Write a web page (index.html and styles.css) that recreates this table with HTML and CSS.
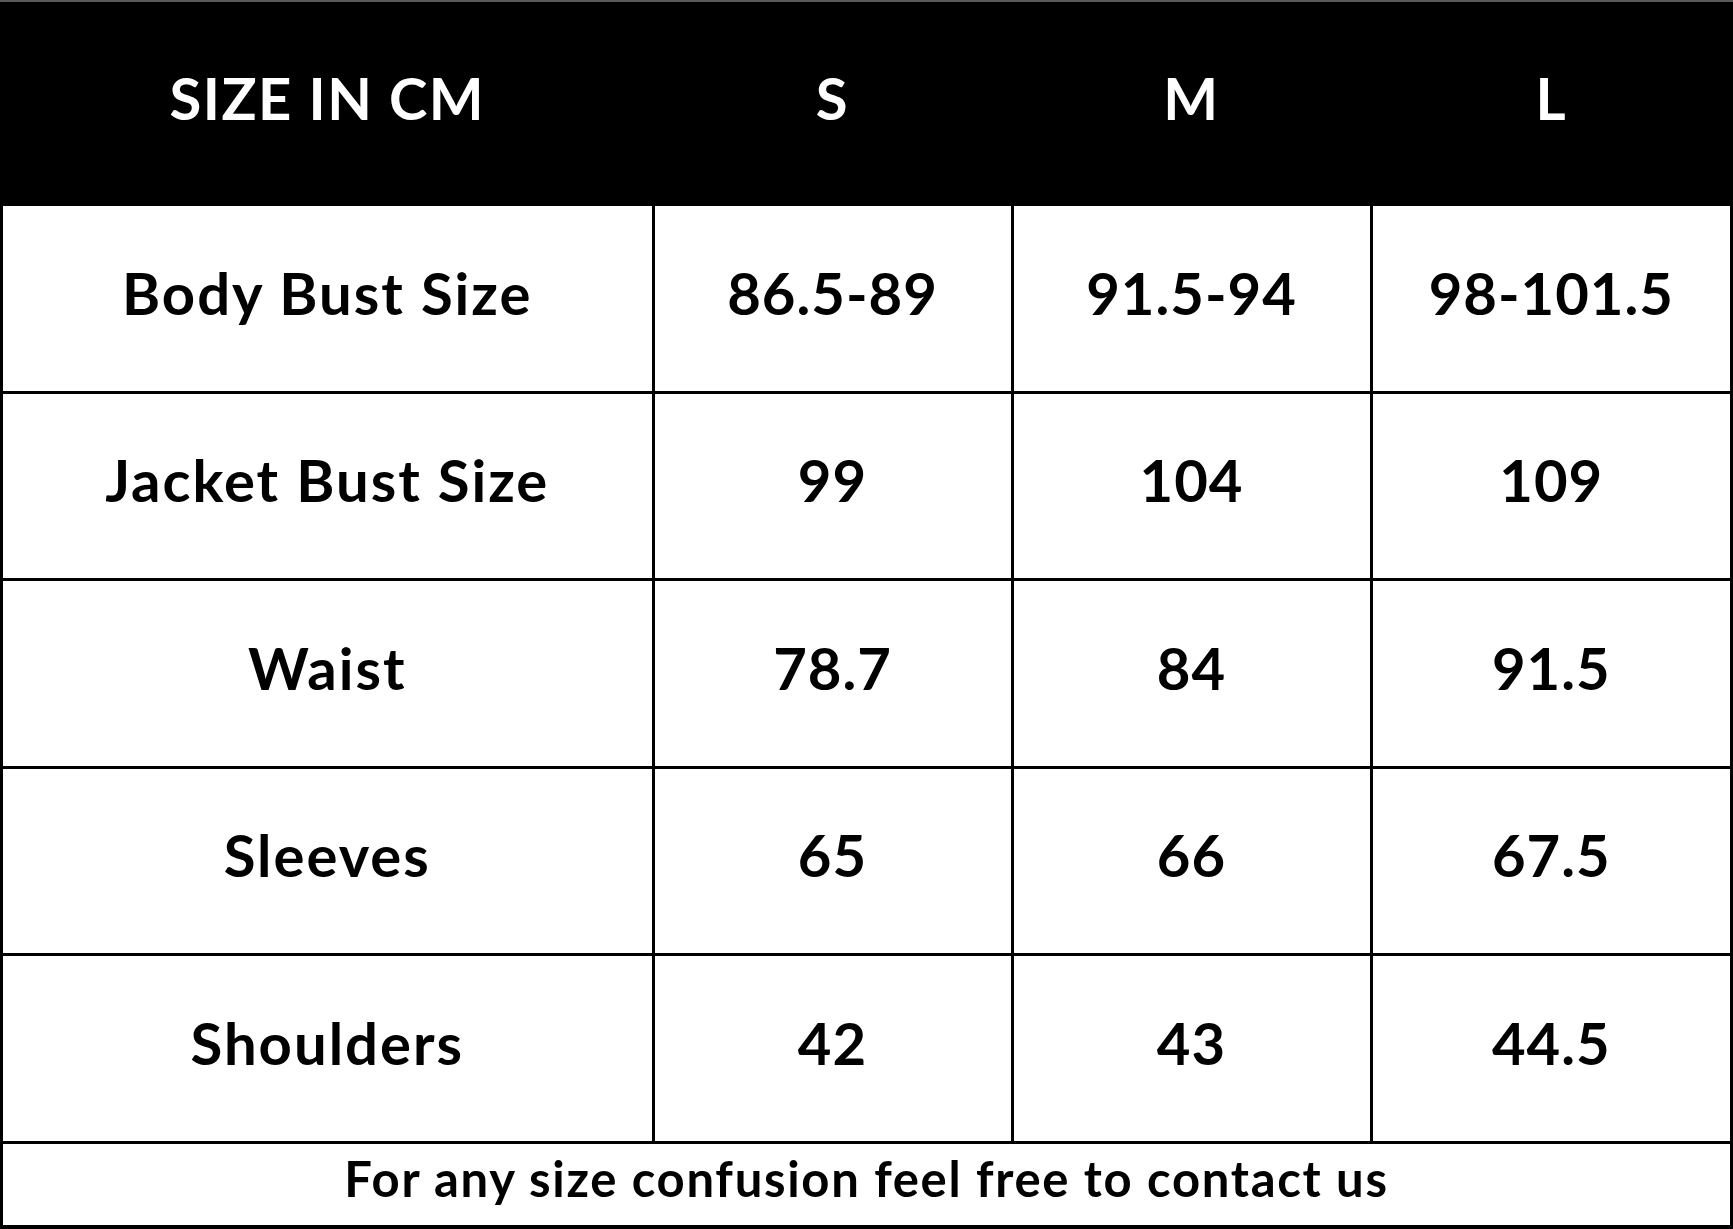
FILE: index.html
```html
<!DOCTYPE html>
<html>
<head>
<meta charset="utf-8">
<link rel="stylesheet" href="styles.css">
</head>
<body>
<div class="chart">
  <div class="cell head">SIZE IN CM</div>
  <div class="cell head">S</div>
  <div class="cell head">M</div>
  <div class="cell head">L</div>

  <div class="cell">Body Bust Size</div>
  <div class="cell val">86.5-89</div>
  <div class="cell val">91.5-94</div>
  <div class="cell val">98-101.5</div>

  <div class="cell">Jacket Bust Size</div>
  <div class="cell val">99</div>
  <div class="cell val">104</div>
  <div class="cell val">109</div>

  <div class="cell">Waist</div>
  <div class="cell val">78.7</div>
  <div class="cell val">84</div>
  <div class="cell val">91.5</div>

  <div class="cell">Sleeves</div>
  <div class="cell val">65</div>
  <div class="cell val">66</div>
  <div class="cell val">67.5</div>

  <div class="cell">Shoulders</div>
  <div class="cell val">42</div>
  <div class="cell val">43</div>
  <div class="cell val">44.5</div>

  <div class="cell foot">For any size confusion feel free to contact us</div>
</div>
</body>
</html>
```

FILE: styles.css
```css
html, body {
  margin: 0;
  padding: 0;
  background: #fff;
}

.chart {
  box-sizing: border-box;
  width: 1733px;
  height: 1229px;
  background: #000;
  padding: 0 3px 4px 3px;
  border-top: 2px solid #5a5a5a;
  display: grid;
  grid-template-columns: 648.5px 356px 356px 1fr;
  grid-template-rows: 201px 184.5px 184.5px 184.5px 184.5px 184.5px 1fr;
  gap: 3px;
  font-family: "Lato", "Liberation Sans", sans-serif;
  font-weight: 700;
  color: #000;
}

.cell {
  background: #fff;
  display: flex;
  align-items: center;
  justify-content: center;
  font-size: 58px;
  letter-spacing: 2px;
  padding-bottom: 12px;
}

.val {
  letter-spacing: 1px;
}

.head {
  background: #000;
  color: #fff;
  padding-bottom: 10px;
  letter-spacing: 1.5px;
}

.foot {
  grid-column: 1 / -1;
  font-size: 49px;
  letter-spacing: 1.7px;
  padding-bottom: 12px;
}
```
